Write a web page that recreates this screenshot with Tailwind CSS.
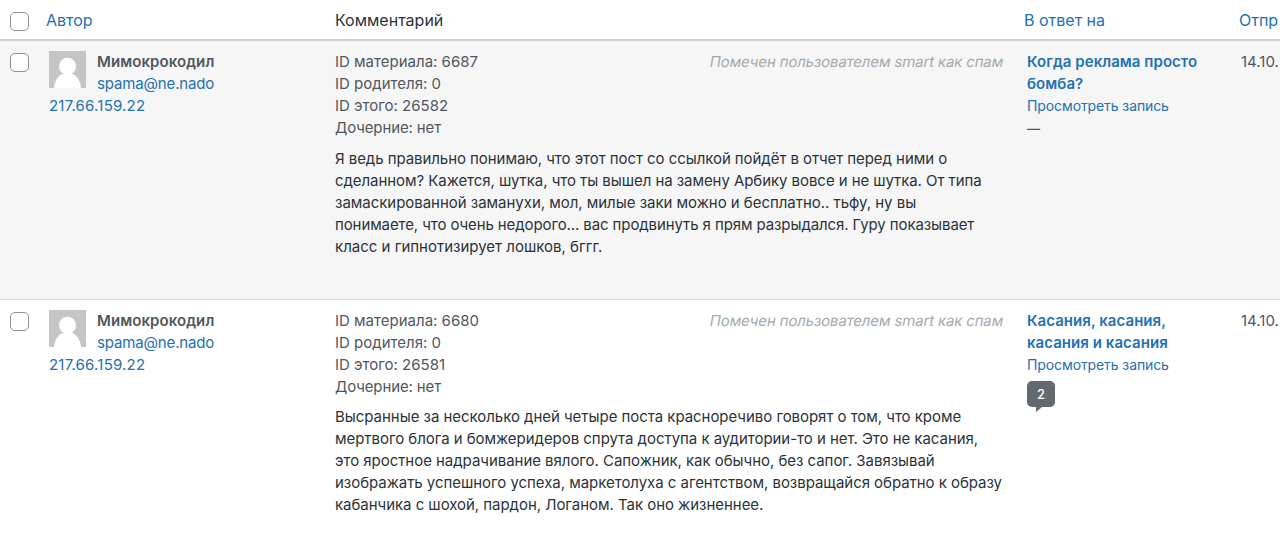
<!DOCTYPE html>
<html lang="ru">
<head>
  <meta charset="UTF-8" />
  <meta name="viewport" content="width=device-width, initial-scale=1.0"/>
  <title>Комментарии</title>
  <script src="https://cdn.jsdelivr.net/npm/@tailwindcss/browser@4"></script>
</head>
<body class="bg-white h-screen overflow-hidden font-['Inter','Liberation_Sans',sans-serif] text-[15px] leading-[22px] text-[#50575e] whitespace-nowrap">

  <!-- Заголовок таблицы -->
  <header class="grid grid-cols-[46px_289px_689px_215px_auto] h-[41px] border-b-2 border-[#d0d1d3] pt-[9px] text-base leading-[22px] text-[#2271b1]">
    <div class="pl-2.5 pt-[3px]"><input type="checkbox" class="block appearance-none size-[19px] border border-[#8c8f94] rounded-[5px] bg-white" /></div>
    <a href="#">Автор</a>
    <span class="text-[#2c3338]">Комментарий</span>
    <a href="#">В ответ на</a>
    <a href="#">Отпр</a>
  </header>

  <!-- Комментарий 26582 -->
  <section class="grid grid-cols-[49px_286px_692px_214px_auto] h-[259px] bg-[#f6f6f7] border-b border-[#d8d9db] pt-2.5">
    <div class="pl-2.5 pt-0.5"><input type="checkbox" class="block appearance-none size-[19px] border border-[#8c8f94] rounded-[5px] bg-white" /></div>
    <div>
      <div class="flex gap-[11px]">
        <svg class="size-[37px]" viewBox="0 0 37 37">
          <rect width="37" height="37" fill="#c5c5c5"/>
          <circle cx="18.5" cy="15.3" r="8.5" fill="#fff"/>
          <path d="M5 37c.8-9 6-15 13.500-15S31.200 28 32 37z" fill="#fff"/>
        </svg>
        <div>
          <strong class="block font-semibold tracking-[0.08px]">Мимокрокодил</strong>
          <a href="#" class="block tracking-[-0.15px] text-[#2271b1]">spama@ne.nado</a>
        </div>
      </div>
      <a href="#" class="tracking-[0.2px] text-[#2271b1]">217.66.159.22</a>
    </div>
    <div class="pr-6">
      <div class="flex justify-between">
        <div>ID материала: 6687<br>ID родителя: 0<br>ID этого: 26582<br><span class="tracking-[-0.12px]">Дочерние: нет</span></div>
        <span class="inline-block h-[22px] -skew-x-10 tracking-[-0.15px] text-[#a7aaad]">Помечен пользователем smart как спам</span>
      </div>
      <p class="mt-[9px] tracking-[-0.06px] text-[#2c3338]">Я ведь правильно понимаю, что этот пост со ссылкой пойдёт в отчет перед ними о<br>сделанном? Кажется, шутка, что ты вышел на замену Арбику вовсе и не шутка. От типа<br><span class="tracking-[-0.03px]">замаскированной заманухи, мол, милые заки можно и бесплатно.. тьфу, ну вы</span><br><span class="tracking-[-0.1px]">понимаете, что очень недорого... вас продвинуть я прям разрыдался. Гуру показывает</span><br><span class="tracking-normal">класс и гипнотизирует лошков, бггг.</span></p>
    </div>
    <div>
      <a href="#" class="block font-semibold tracking-[0.05px] text-[#2271b1]">Когда реклама просто<br>бомба?</a>
      <a href="#" class="block text-sm leading-[22px] tracking-[-0.1px] text-[#2271b1]">Просмотреть запись</a>
      <span class="block text-[13px] leading-[22px] font-semibold">—</span>
    </div>
    <div>14.10.</div>
  </section>

  <!-- Комментарий 26581 -->
  <section class="grid grid-cols-[49px_286px_692px_214px_auto] h-[255px] bg-white pt-2.5">
    <div class="pl-2.5 pt-0.5"><input type="checkbox" class="block appearance-none size-[19px] border border-[#8c8f94] rounded-[5px] bg-white" /></div>
    <div>
      <div class="flex gap-[11px]">
        <svg class="size-[37px]" viewBox="0 0 37 37">
          <rect width="37" height="37" fill="#c5c5c5"/>
          <circle cx="18.5" cy="15.3" r="8.5" fill="#fff"/>
          <path d="M5 37c.8-9 6-15 13.500-15S31.200 28 32 37z" fill="#fff"/>
        </svg>
        <div>
          <strong class="block font-semibold tracking-[0.08px]">Мимокрокодил</strong>
          <a href="#" class="block tracking-[-0.15px] text-[#2271b1]">spama@ne.nado</a>
        </div>
      </div>
      <a href="#" class="tracking-[0.2px] text-[#2271b1]">217.66.159.22</a>
    </div>
    <div class="pr-6">
      <div class="flex justify-between">
        <div>ID материала: 6680<br>ID родителя: 0<br>ID этого: 26581<br><span class="tracking-[-0.12px]">Дочерние: нет</span></div>
        <span class="inline-block h-[22px] -skew-x-10 tracking-[-0.15px] text-[#a7aaad]">Помечен пользователем smart как спам</span>
      </div>
      <p class="mt-2 tracking-[-0.04px] text-[#2c3338]">Высранные за несколько дней четыре поста красноречиво говорят о том, что кроме<br>мертвого блога и бомжеридеров спрута доступа к аудитории-то и нет. Это не касания,<br>это яростное надрачивание вялого. Сапожник, как обычно, без сапог. Завязывай<br>изображать успешного успеха, маркетолуха с агентством, возвращайся обратно к образу<br>кабанчика с шохой, пардон, Логаном. Так оно жизненнее.</p>
    </div>
    <div>
      <a href="#" class="block font-semibold tracking-[0.05px] text-[#2271b1]">Касания, касания,<br>касания и касания</a>
      <a href="#" class="block text-sm leading-[22px] tracking-[-0.1px] text-[#2271b1]">Просмотреть запись</a>
      <a href="#" class="block w-7 mt-[5px]">
        <span class="block h-[26px] rounded-[5px] bg-[#646970] text-center text-[13px] leading-[26px] font-medium text-white">2</span>
        <svg class="ml-[9px] w-[6px] h-[5px]" viewBox="0 0 6 5"><path d="M0 0h6L0 5z" fill="#646970"/></svg>
      </a>
    </div>
    <div>14.10.</div>
  </section>

</body>
</html>
